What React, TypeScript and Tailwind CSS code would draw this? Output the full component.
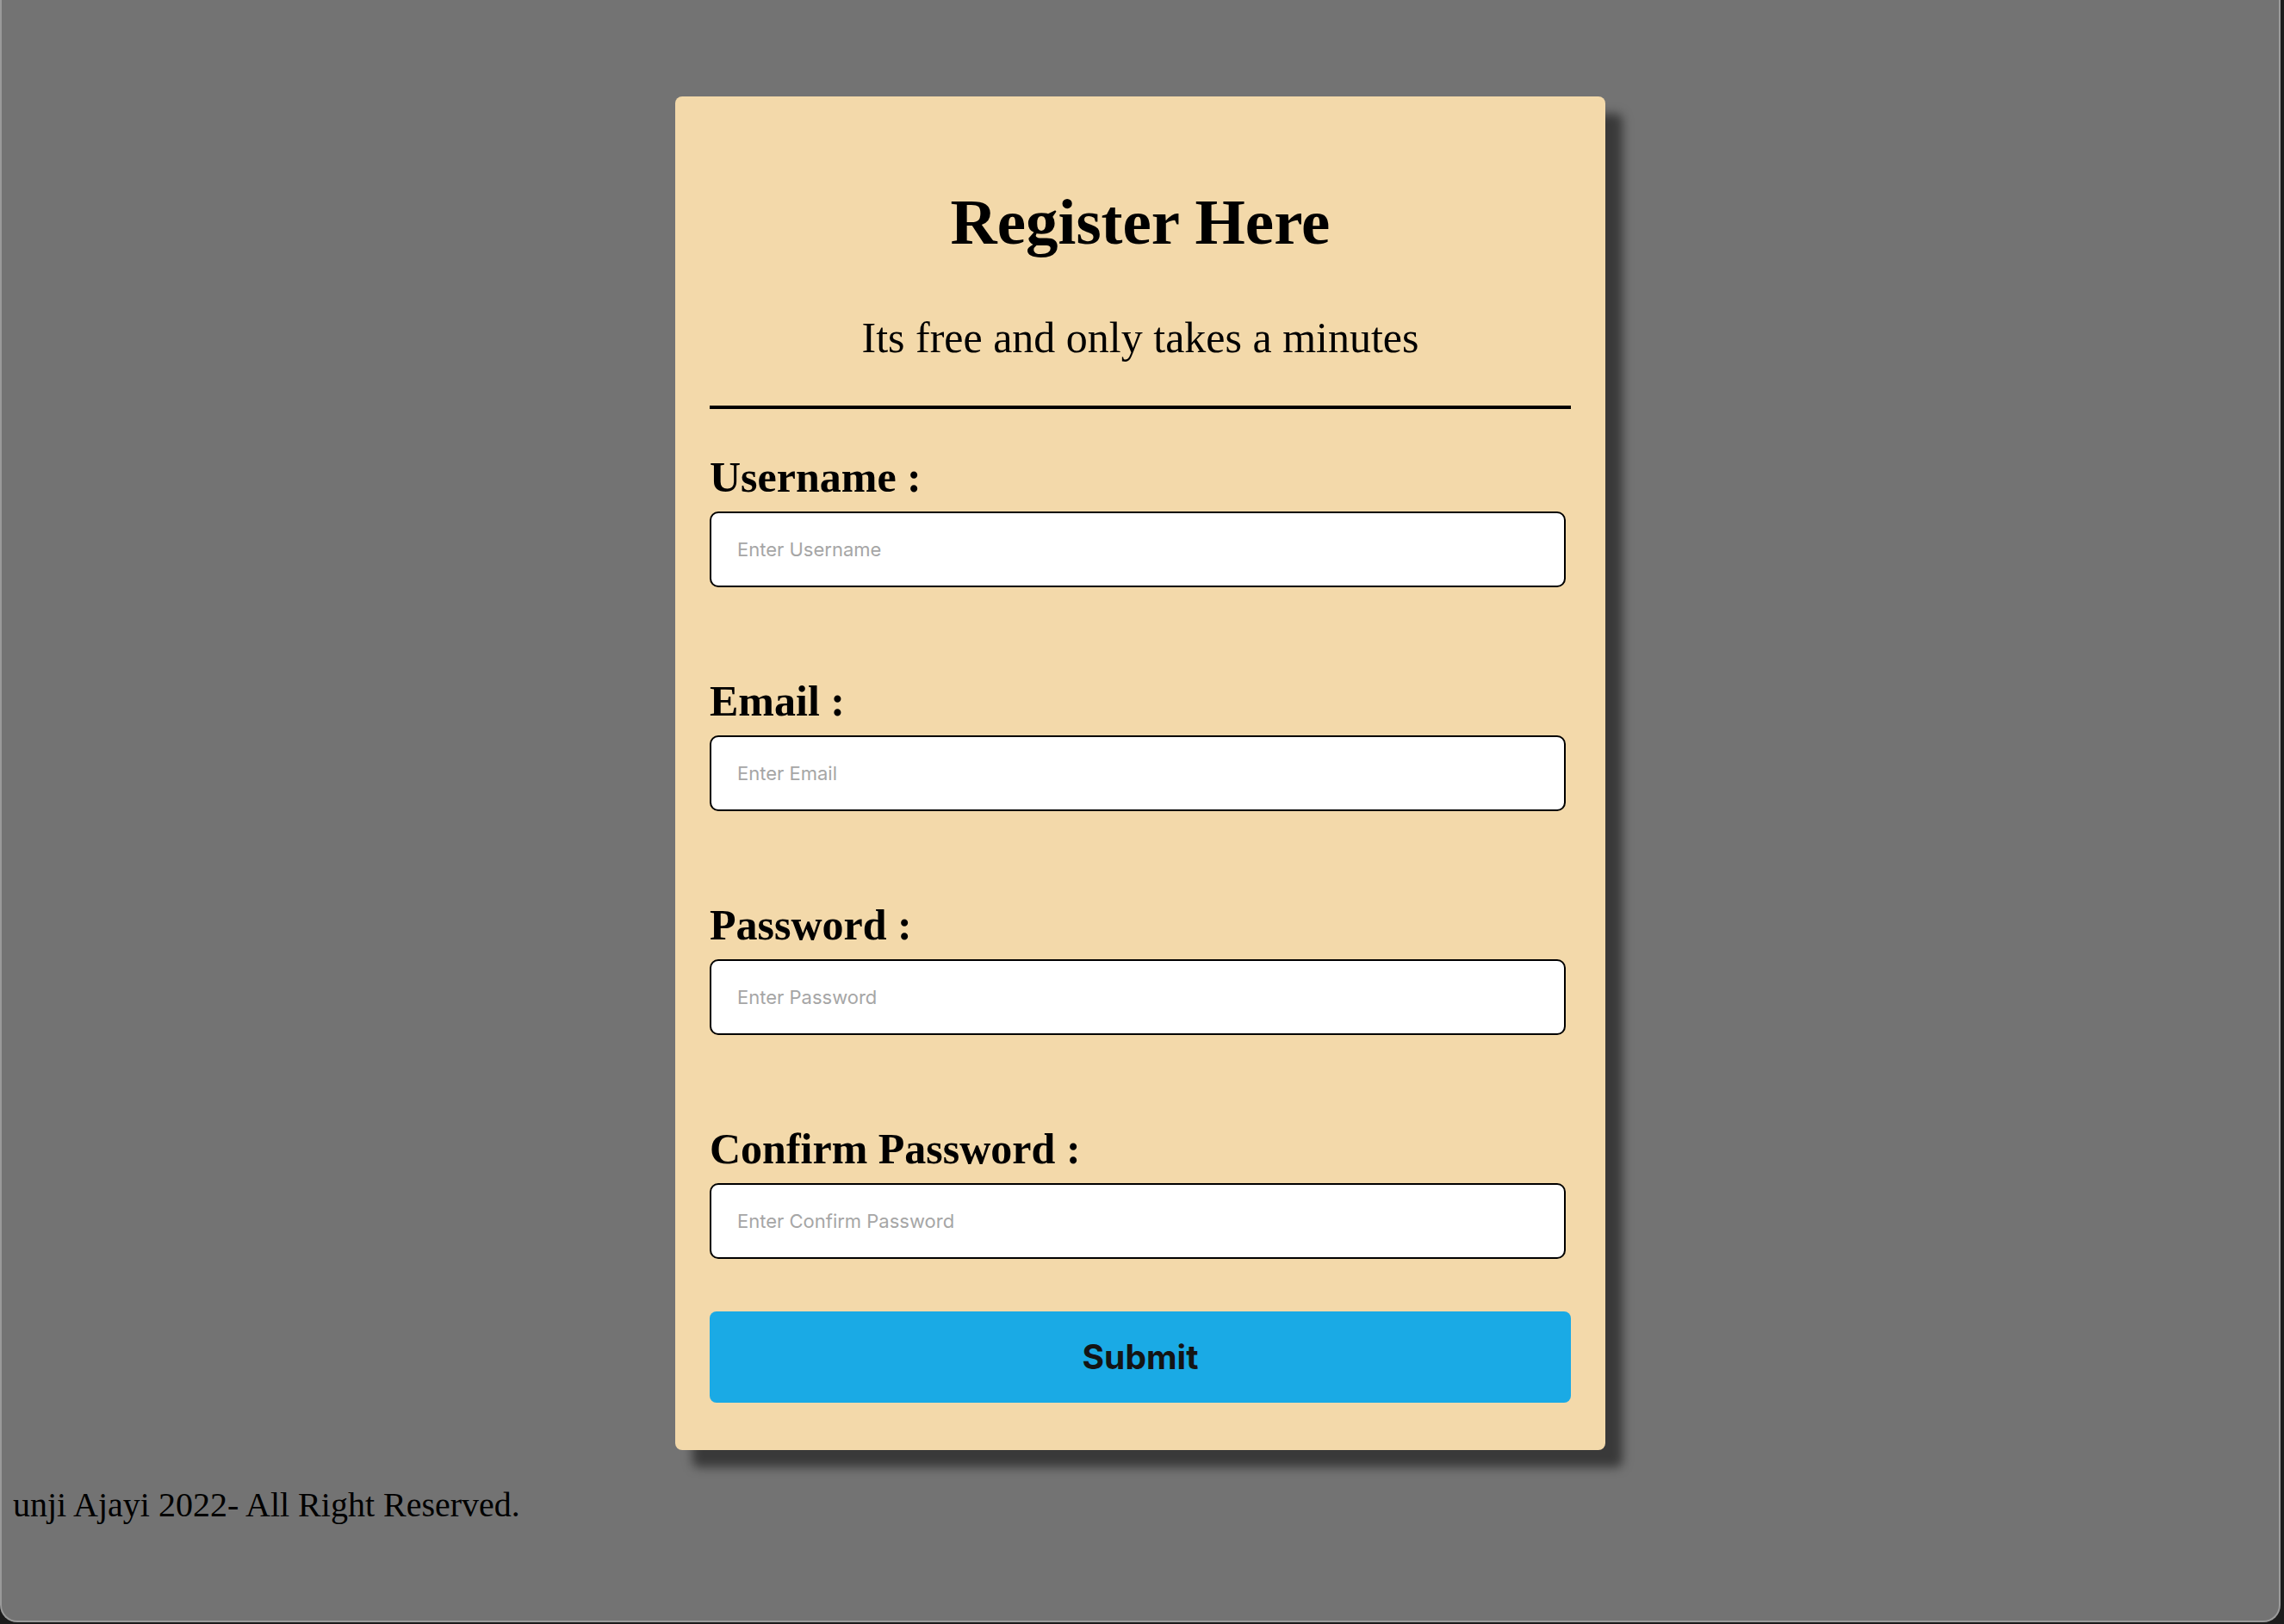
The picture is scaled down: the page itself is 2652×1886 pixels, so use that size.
import React from "react";

const fields = [
  { label: "Username", placeholder: "Enter Username", type: "text" },
  { label: "Email", placeholder: "Enter Email", type: "email" },
  { label: "Password", placeholder: "Enter Password", type: "password" },
  { label: "Confirm Password", placeholder: "Enter Confirm Password", type: "password" },
];

export default function App() {
  return (
    <div className="w-[2652px] h-[1886px] bg-[#1c1c1c] overflow-hidden">
      <div className="w-[2648px] h-[1884px] bg-[#737373] border-x-2 border-b-2 border-[#9a9a9a] rounded-b-[20px] flex flex-col font-['Liberation_Serif','Times_New_Roman',serif] text-black">
        <div className="pt-[112px] flex justify-center">
          <form
            className="w-[1080px] bg-[#f3d9aa] rounded-[8px] px-[40px] pt-[101px] pb-[55px] shadow-[20px_20px_12px_rgba(0,0,0,0.5)] flex flex-col"
            onSubmit={(e) => e.preventDefault()}
          >
            <h1 className="text-[75px] leading-[90px] font-bold text-center">Register Here</h1>
            <p className="mt-[59px] text-[50px] leading-[60px] text-center">Its free and only takes a minutes</p>
            <div className="mt-[49px] h-[4px] bg-black" />
            {fields.map((f, i) => (
              <div key={f.label} className={i === 0 ? "mt-[49px] flex flex-col" : "mt-[102px] flex flex-col"}>
                <label className="text-[50px] leading-[60px] font-bold">{f.label} :</label>
                <input
                  type={f.type}
                  placeholder={f.placeholder}
                  className="mt-[10px] h-[88px] w-[994px] bg-white border-2 border-black rounded-[10px] pl-[30px] text-[22px] font-['Inter',sans-serif] placeholder:text-[#a6a6a6] outline-none"
                />
              </div>
            ))}
            <button
              type="submit"
              className="mt-[61px] h-[106px] w-full bg-[#1aaae5] rounded-[8px] text-[39px] font-bold text-[#141414] font-['Inter',sans-serif]"
            >
              Submit
            </button>
          </form>
        </div>
        <div className="mt-[40px] pl-[13px] text-[40px] leading-[48px] whitespace-nowrap">
          unji Ajayi 2022- All Right Reserved.
        </div>
      </div>
    </div>
  );
}
